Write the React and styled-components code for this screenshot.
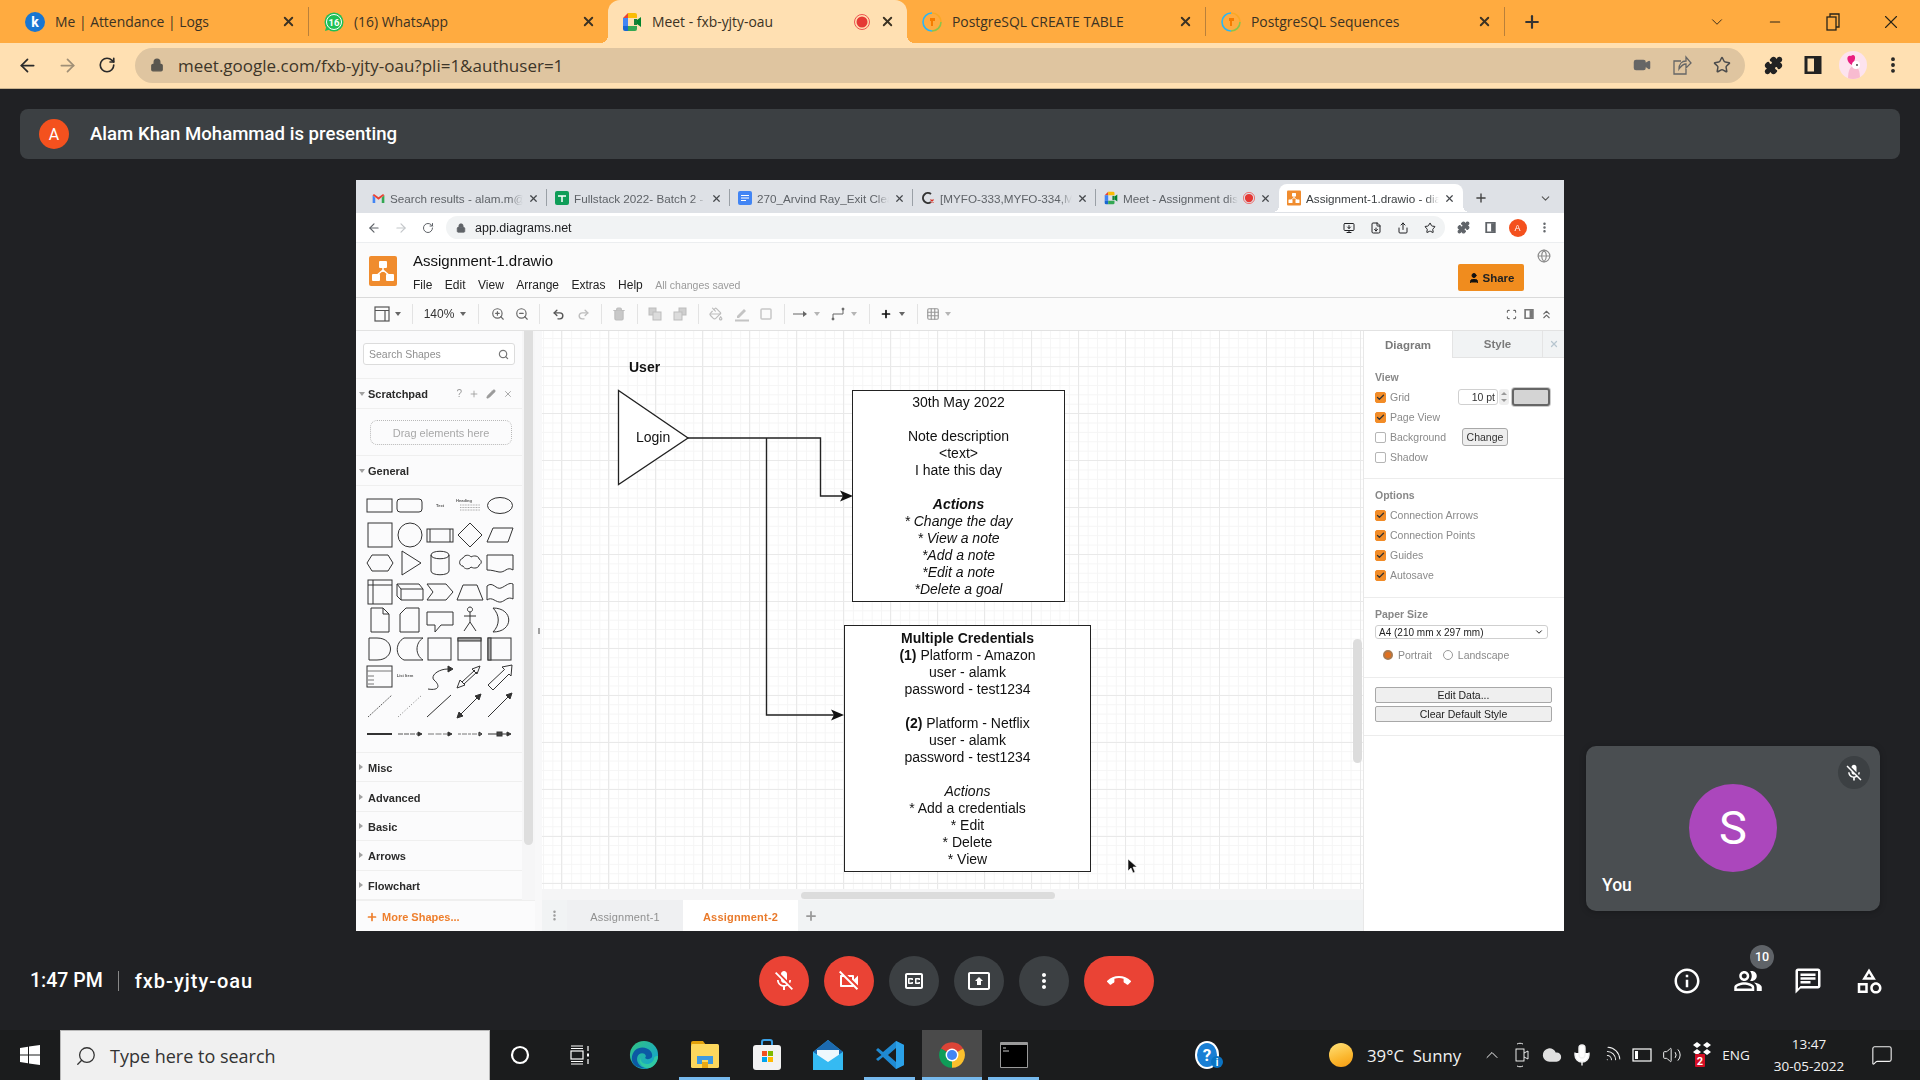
import React from "react";
import styled, { createGlobalStyle } from "styled-components";
import {
  ArrowLeft, ArrowRight, RotateCw, Lock, Video, Share, Star, Puzzle, MonitorDown, FileDown,
  MoreVertical, Minus, X, Plus, ChevronDown, ChevronUp, Search, ZoomIn, ZoomOut,
  Undo2, Redo2, Trash2, PaintBucket, Pencil, Grid3x3, Globe, Scan, ChevronsUp,
  User, Check, Cloud, Mic, Wifi, Volume2, MessageSquare,
} from "lucide-react";

const GlobalStyle = createGlobalStyle`
  html, body {
    margin: 0;
    padding: 0;
    background: #202124;
  }
  * {
    box-sizing: border-box;
  }
`;

const Page = styled.div`
  width: 1920px;
  height: 1080px;
  display: flex;
  flex-direction: column;
  overflow: hidden;
  font-family: "Open Sans", sans-serif;
`;

/* flared foot of an active browser tab */
const tabFlare = (color, r) => `
  &::before,
  &::after {
    content: "";
    position: absolute;
    bottom: 0;
    width: ${r}px;
    height: ${r}px;
  }
  &::before {
    left: -${r}px;
    background: radial-gradient(circle at 0 0, transparent ${r}px, ${color} ${r}px);
  }
  &::after {
    right: -${r}px;
    background: radial-gradient(circle at 100% 0, transparent ${r}px, ${color} ${r}px);
  }
`;

/* ---------- outer browser ---------- */

const TabStrip = styled.div`
  height: 43px;
  flex: none;
  background: #ffab40;
  display: flex;
  align-items: stretch;
  padding: 0 0 0 10px;
`;

const BrowserTab = styled.div`
  width: 299px;
  flex: none;
  display: flex;
  align-items: center;
  padding-left: ${({ $active }) => ($active ? "14px" : "15px")};
  padding-right: 12px;
  gap: 10px;
  position: relative;
  font-size: 13.9px;
  color: #3b3223;
  background: ${({ $active }) => ($active ? "#ffe0b2" : "transparent")};
  border-radius: ${({ $active }) => ($active ? "12px 12px 0 0" : "0")};
  ${({ $active }) => $active && tabFlare("#ffe0b2", 8)}

  ${({ $divider }) =>
    $divider &&
    `
    border-right: 1px solid #b9803a;
    border-image: linear-gradient(to bottom, transparent 18%, #b9803a 18%, #b9803a 82%, transparent 82%) 1;
  `}
`;

const TabTitle = styled.span`
  flex: 1;
  white-space: nowrap;
  overflow: hidden;
`;

const TabIconBox = styled.span`
  width: 20px;
  height: 20px;
  flex: none;
  display: flex;
  align-items: center;
  justify-content: center;
`;

const IconSlot = styled.span`
  width: ${({ $w }) => $w}px;
  flex: none;
  display: flex;
  align-items: center;
  justify-content: center;
  color: ${({ $color }) => $color || "inherit"};
  position: relative;
`;

const WindowControls = styled.div`
  margin-left: auto;
  display: flex;
  align-items: center;
  color: #2a2418;
`;

const NavBar = styled.div`
  height: 46px;
  flex: none;
  background: #ffe0b2;
  border-bottom: 1px solid #c9b38f;
  display: flex;
  align-items: center;
  padding: 0 7px 1px 7px;
`;

const AddressBar = styled.div`
  width: 1610px;
  height: 35px;
  flex: none;
  margin-left: 8px;
  background: #dfc5a0;
  border-radius: 18px;
  display: flex;
  align-items: center;
  padding-left: 15px;
  font-size: 17px;
  color: #3d3528;
`;

const AddressText = styled.span`
  margin-left: 14px;
  flex: 1;
  white-space: nowrap;
`;

const ProfileBadge = styled.span`
  width: 28px;
  height: 28px;
  border-radius: 50%;
  background: #fde3ee;
  display: flex;
  align-items: center;
  justify-content: center;
  overflow: hidden;
`;

/* ---------- meet ---------- */

const MeetArea = styled.main`
  flex: 1;
  min-height: 0;
  background: #202124;
  position: relative;
  display: flex;
  flex-direction: column;
`;

const Banner = styled.div`
  height: 50px;
  margin: 20px 20px 0;
  flex: none;
  background: #3c4043;
  border-radius: 8px;
  display: flex;
  align-items: center;
  padding-left: 19px;
  gap: 21px;
  color: #fff;
  font-family: Roboto, sans-serif;
  font-size: 18.6px;
  font-weight: 500;
`;

const BannerAvatar = styled.span`
  width: 30px;
  height: 30px;
  border-radius: 50%;
  background: #f4511e;
  display: flex;
  align-items: center;
  justify-content: center;
  font-size: 16px;
  font-weight: 400;
`;

const SharedScreen = styled.section`
  width: 1208px;
  height: 751px;
  margin: 21px 0 0 356px;
  flex: none;
  background: #fff;
  display: flex;
  flex-direction: column;
  filter: blur(0.35px);
  font-family: "Liberation Sans", Arial, sans-serif;
  overflow: hidden;
`;

const InnerTabs = styled.div`
  height: 33px;
  flex: none;
  background: #dee1e6;
  display: flex;
  padding: 4px 0 1px 8px;
`;

const InnerTab = styled.div`
  width: ${({ $active }) => ($active ? "184px" : "183px")};
  flex: none;
  display: flex;
  align-items: center;
  gap: 5px;
  padding: 0 8px;
  font-size: 11.7px;
  color: ${({ $active }) => ($active ? "#3c4043" : "#5f6368")};
  background: ${({ $active }) => ($active ? "#fff" : "transparent")};
  border-radius: 8px 8px 0 0;
  position: relative;
  ${({ $active }) => $active && tabFlare("#fff", 6)}
`;

const InnerDivider = styled.span`
  position: absolute;
  right: 0;
  top: 5px;
  bottom: 6px;
  width: 1px;
  background: #9aa0a6;
`;

const InnerTitle = styled.span`
  flex: 1;
  min-width: 0;
  white-space: nowrap;
  mask-image: linear-gradient(to right, #000 90%, transparent);
`;

const InnerBar = styled.div`
  height: 30px;
  flex: none;
  background: #fff;
  display: flex;
  align-items: center;
  padding-left: 4px;
  color: #5f6368;
  border-bottom: 1px solid #eceef0;
`;

const InnerAddress = styled.div`
  width: 999px;
  height: 23px;
  flex: none;
  margin-left: 5px;
  background: #f1f3f4;
  border-radius: 12px;
  display: flex;
  align-items: center;
  padding-left: 10px;
  font-size: 12.5px;
  color: #202124;
`;

const InnerAddressText = styled.span`
  flex: 1;
  margin-left: 9px;
`;

const InnerAvatar = styled.span`
  width: 18px;
  height: 18px;
  border-radius: 50%;
  background: #f4511e;
  color: #fff;
  font-size: 9px;
  display: flex;
  align-items: center;
  justify-content: center;
`;

const DrawHeader = styled.header`
  height: 55px;
  flex: none;
  background: #fbfbfb;
  border-bottom: 1px solid #dadada;
  display: flex;
  padding: 13px 0 0 13px;
  position: relative;
`;

const DrawTitleBlock = styled.div`
  margin-left: 16px;
  margin-top: -7px;
  display: flex;
  flex-direction: column;
`;

const DrawTitle = styled.div`
  font-size: 15px;
  color: #111;
  height: 25px;
  line-height: 23px;
`;

const MenuRow = styled.div`
  display: flex;
  align-items: center;
  height: 22px;
  font-size: 12px;
  color: #222;
  gap: 12.5px;
`;

const SavedNote = styled.span`
  font-size: 10.5px;
  color: #9a9a9a;
`;

const ShareButton = styled.button`
  position: absolute;
  left: 1102px;
  top: 21px;
  width: 66px;
  height: 27px;
  background: #f08c1e;
  border: 0;
  border-radius: 2px;
  display: flex;
  align-items: center;
  justify-content: center;
  gap: 3px;
  font: bold 11.5px "Liberation Sans", sans-serif;
  color: #222;
`;

const GlobeSpot = styled.span`
  position: absolute;
  left: 1181px;
  top: 6px;
  color: #8d8d8d;
  display: flex;
`;

const ToolBar = styled.div`
  height: 33px;
  flex: none;
  background: #fbfbfb;
  border-bottom: 1px solid #e2e2e2;
  display: flex;
  align-items: center;
  padding-left: 14px;
  color: #bdbdbd;
  font-size: 12px;
`;

const ToolSep = styled.span`
  width: ${({ $w }) => $w}px;
  height: 20px;
  flex: none;
  display: flex;
  justify-content: center;

  &::after {
    content: "";
    width: 1px;
    height: 100%;
    background: #e3e3e3;
  }
`;

const Caret = styled.span`
  width: ${({ $w }) => $w}px;
  flex: none;
  display: flex;
  justify-content: center;

  &::after {
    content: "";
    border-left: 3.5px solid transparent;
    border-right: 3.5px solid transparent;
    border-top: 4px solid ${({ $dark }) => ($dark ? "#666" : "#b5b5b5")};
  }
`;

const ZoomValue = styled.span`
  width: 34px;
  flex: none;
  text-align: center;
  color: #333;
  font-size: 12px;
`;

const ToolRight = styled.div`
  margin-left: auto;
  padding-right: 9px;
  display: flex;
  color: #666;
`;

const DrawBody = styled.div`
  flex: 1;
  min-height: 0;
  display: flex;
`;

/* ---------- shapes sidebar ---------- */

const Sidebar = styled.aside`
  width: 179px;
  flex: none;
  display: flex;
  flex-direction: column;
  background: #fbfbfc;
`;

const SidebarScroll = styled.div`
  flex: 1;
  min-height: 0;
  display: flex;
`;

const SidebarList = styled.div`
  width: 166px;
  flex: none;
  display: flex;
  flex-direction: column;
`;

const SidebarTrack = styled.div`
  width: 13px;
  flex: none;
  background: #f6f6f7;
  display: flex;
  justify-content: center;
`;

const SidebarThumb = styled.div`
  width: 9px;
  height: 514px;
  background: #dedede;
  border-radius: 0 0 5px 5px;
`;

const Resizer = styled.div`
  width: 7px;
  flex: none;
  background: #f8f8f9;
  display: flex;
  align-items: center;
  justify-content: center;

  &::after {
    content: "";
    width: 2px;
    height: 6px;
    background: #a0a0a0;
  }
`;

const SearchSection = styled.div`
  height: 48px;
  flex: none;
  padding: 12px 7px 0;
  border-bottom: 1px solid #efefef;
`;

const SearchBox = styled.div`
  height: 22px;
  background: #fff;
  border: 1px solid #dcdcdc;
  border-radius: 3px;
  display: flex;
  align-items: center;
  justify-content: space-between;
  padding: 0 5px;
  font-size: 10.5px;
  color: #8f8f8f;
`;

const GroupHeader = styled.div`
  height: ${({ $h }) => $h || 30}px;
  flex: none;
  display: flex;
  align-items: center;
  font-size: 11px;
  font-weight: bold;
  color: #2b2b2b;
  padding-left: 12px;
  padding-top: ${({ $h }) => ($h ? 2 : 0)}px;
  position: relative;
  border-bottom: 1px solid #efefef;
`;

const GroupArrow = styled.span`
  position: absolute;
  left: 3px;
  top: 50%;
  margin-top: -2px;
  ${({ $open }) =>
    $open
      ? `border-left: 3px solid transparent; border-right: 3px solid transparent; border-top: 4px solid #a0a0a0;`
      : `margin-top: -3px; border-top: 3px solid transparent; border-bottom: 3px solid transparent; border-left: 4px solid #a0a0a0;`}
`;

const ScratchTools = styled.span`
  margin-left: auto;
  display: flex;
  align-items: center;
  gap: 7px;
  padding-right: 9px;
  color: #9a9a9a;
  font-weight: normal;
  font-size: 10px;
`;

const DropSection = styled.div`
  height: 47px;
  flex: none;
  padding: 11px 10px 0 14px;
  border-bottom: 1px solid #efefef;
`;

const DropBox = styled.div`
  height: 25px;
  border: 1px dotted #b8b8b8;
  border-radius: 7px;
  display: flex;
  align-items: center;
  justify-content: center;
  font-size: 11px;
  color: #a8a8a8;
`;

const Palette = styled.div`
  height: 267px;
  flex: none;
  padding: 6px 0 0 9px;
  display: grid;
  grid-template-columns: repeat(5, 30px);
  grid-auto-rows: 28.5px;
  border-bottom: 1px solid #efefef;
`;

const ShapeSvg = styled.svg`
  width: 30px;
  height: 28px;
  overflow: visible;
  fill: none;
  stroke: #333;
  stroke-width: 1;

  text {
    stroke: none;
    fill: #555;
    font-family: "Liberation Sans", sans-serif;
    font-size: 4px;
    font-weight: bold;
    text-anchor: middle;
  }
`;

const MoreShapes = styled.div`
  height: 31px;
  flex: none;
  display: flex;
  align-items: center;
  gap: 4px;
  padding: 2px 0 0 10px;
  font-size: 11px;
  font-weight: bold;
  color: #ee7f2d;
  border-top: 1px solid #efefef;
`;

/* ---------- canvas ---------- */

const CanvasColumn = styled.div`
  flex: 1;
  min-width: 0;
  display: flex;
  flex-direction: column;
`;

const Canvas = styled.div`
  flex: 1;
  min-height: 0;
  position: relative;
  overflow: hidden;
  background-color: #fff;
  background-image:
    linear-gradient(to right, #e9e9e9 1px, transparent 1px),
    linear-gradient(to bottom, #e9e9e9 1px, transparent 1px),
    linear-gradient(to right, #f5f5f5 1px, transparent 1px),
    linear-gradient(to bottom, #f5f5f5 1px, transparent 1px);
  background-size: 47px 47px, 47px 47px, 9.4px 9.4px, 9.4px 9.4px;
  background-position: 19px 35px, 19px 35px, 1px 7px, 1px 7px;
`;

const DiagramWires = styled.svg`
  position: absolute;
  inset: 0;
  width: 100%;
  height: 100%;
`;

const DiagramText = styled.div`
  position: absolute;
  left: ${({ $x }) => $x}px;
  top: ${({ $y }) => $y}px;
  font-size: 14px;
  line-height: 17px;
  color: #111;
  font-weight: ${({ $bold }) => ($bold ? "bold" : "normal")};
`;

const NoteBox = styled.div`
  position: absolute;
  left: ${({ $x }) => $x}px;
  top: ${({ $y }) => $y}px;
  width: ${({ $w }) => $w}px;
  height: ${({ $h }) => $h}px;
  padding-top: ${({ $pad }) => $pad}px;
  background: #fff;
  border: 1.5px solid #222;
  text-align: center;
  font-size: 14px;
  line-height: 17px;
  color: #111;
`;

const NoteLine = styled.div`
  height: 17px;
  font-style: ${({ $italic }) => ($italic ? "italic" : "normal")};
  font-weight: ${({ $bold }) => ($bold ? "bold" : "normal")};
  white-space: pre;
`;

const CanvasScrollThumb = styled.div`
  position: absolute;
  left: 811px;
  top: 308px;
  width: 9px;
  height: 124px;
  background: #dcdcdc;
  border-radius: 5px;
`;

const Pointer = styled.svg`
  position: absolute;
  left: 585px;
  top: 527px;
  width: 11px;
  height: 16px;
`;

const HorizontalStrip = styled.div`
  height: 11px;
  flex: none;
  background: #f5f5f6;
  padding: 3px 0 0 259px;
`;

const HorizontalThumb = styled.div`
  width: 254px;
  height: 7px;
  background: #dcdcdc;
  border-radius: 4px;
`;

const PageTabs = styled.div`
  height: 31px;
  flex: none;
  background: #f1f3f4;
  display: flex;
  align-items: stretch;
  font-size: 11px;
  font-weight: bold;
`;

const PageMenu = styled.span`
  width: 25px;
  flex: none;
  display: flex;
  align-items: center;
  justify-content: center;
  color: #999;
`;

const PageTab = styled.span`
  width: ${({ $w }) => $w}px;
  flex: none;
  display: flex;
  align-items: center;
  justify-content: center;
  padding-top: 2px;
  color: ${({ $active }) => ($active ? "#e97a2b" : "#909090")};
  background: ${({ $active }) => ($active ? "#fff" : "#eff0f2")};
  font-weight: ${({ $active }) => ($active ? "bold" : "normal")};
  letter-spacing: 0.2px;
`;

const PageAdd = styled.span`
  width: 26px;
  display: flex;
  align-items: center;
  justify-content: center;
  color: #999;
`;

/* ---------- format panel ---------- */

const FormatPanel = styled.aside`
  width: 201px;
  flex: none;
  background: #fff;
  border-left: 1px solid #e8e8e8;
  display: flex;
  flex-direction: column;
  font-size: 10.5px;
  color: #8a8a8a;
`;

const PanelTabs = styled.div`
  height: 27px;
  flex: none;
  display: flex;
  font-size: 11.5px;
  font-weight: bold;
  color: #7a7a7a;
`;

const PanelTab = styled.div`
  width: ${({ $w }) => $w}px;
  flex: none;
  display: flex;
  align-items: center;
  justify-content: center;
  background: ${({ $active }) => ($active ? "#fff" : "#f1f3f4")};
  border-bottom: ${({ $active }) => ($active ? "none" : "1px solid #e4e4e4")};
  border-left: ${({ $active }) => ($active ? "none" : "1px solid #e4e4e4")};
  color: ${({ $light }) => ($light ? "#b8c6cf" : "inherit")};
`;

const PanelSection = styled.div`
  padding: ${({ $top }) => $top}px 11px ${({ $bottom }) => $bottom}px;
  border-bottom: 1px solid #ececec;
`;

const PanelHeading = styled.div`
  height: 14px;
  line-height: 14px;
  margin-bottom: 3px;
  font-weight: bold;
  color: #888;
`;

const OptionRow = styled.div`
  height: 20px;
  display: flex;
  align-items: center;
  white-space: nowrap;
`;

const CheckBox = styled.span`
  width: 11px;
  height: 11px;
  flex: none;
  border-radius: 2px;
  margin-right: 4px;
  display: flex;
  align-items: center;
  justify-content: center;
  color: #333;
  background: ${({ $on }) => ($on ? "#f28c28" : "#fff")};
  border: 1px solid ${({ $on }) => ($on ? "#f28c28" : "#b5b5b5")};
`;

const OptionLabel = styled.span`
  width: ${({ $w }) => ($w ? `${$w}px` : "auto")};
  flex: none;
`;

const PointInput = styled.span`
  width: 40px;
  height: 16px;
  background: #fff;
  border: 1px solid #d0d0d0;
  border-radius: 3px;
  text-align: right;
  line-height: 14px;
  padding-right: 2px;
  color: #333;
`;

const Spinner = styled.span`
  width: 10px;
  height: 16px;
  margin-left: 1px;
  background: #eee;
  border-radius: 3px;
  display: flex;
  flex-direction: column;
  align-items: center;
  justify-content: space-evenly;

  &::before,
  &::after {
    content: "";
    border-left: 3px solid transparent;
    border-right: 3px solid transparent;
  }
  &::before {
    border-bottom: 3px solid #999;
  }
  &::after {
    border-top: 3px solid #999;
  }
`;

const ColorSwatch = styled.span`
  width: 38px;
  height: 18px;
  margin-left: 3px;
  background: #d4d4d4;
  border: 2px solid #666;
  border-radius: 3px;
  box-shadow: 0 0 0 1px #ccc;
`;

const ChangeButton = styled.span`
  width: 46px;
  height: 18px;
  margin-left: 4px;
  background: #eeeeee;
  border: 1px solid #a8a8a8;
  border-radius: 3px;
  color: #333;
  display: flex;
  align-items: center;
  justify-content: center;
`;

const PaperSelect = styled.div`
  width: 173px;
  height: 14px;
  margin-top: 4px;
  border: 1px solid #cfcfcf;
  border-radius: 3px;
  display: flex;
  align-items: center;
  justify-content: space-between;
  padding: 0 3px;
  color: #222;
  font-size: 10px;
`;

const RadioRow = styled.div`
  height: 20px;
  margin-top: 6px;
  display: flex;
  align-items: center;
  padding-left: 8px;
`;

const RadioDot = styled.span`
  width: 10px;
  height: 10px;
  flex: none;
  border-radius: 50%;
  margin-right: 5px;
  margin-left: ${({ $gap }) => $gap || 0}px;
  background: ${({ $on }) => ($on ? "#e0701f" : "#fff")};
  border: ${({ $on }) => ($on ? "2px solid #a8794f" : "1px solid #999")};
`;

const WideButton = styled.div`
  width: 177px;
  height: 16px;
  margin-bottom: ${({ $gap }) => $gap || 0}px;
  background: #efefef;
  border: 1px solid #a8a8a8;
  border-radius: 2px;
  color: #222;
  display: flex;
  align-items: center;
  justify-content: center;
`;

/* ---------- meet bottom ---------- */

const SelfTile = styled.div`
  position: absolute;
  left: 1586px;
  top: 657px;
  width: 294px;
  height: 165px;
  background: #4a4e51;
  border-radius: 10px;
  box-shadow: 0 1px 6px rgba(0, 0, 0, 0.25);
  display: flex;
  align-items: center;
  justify-content: center;
`;

const SelfAvatar = styled.div`
  width: 88px;
  height: 88px;
  margin-top: -2px;
  border-radius: 50%;
  background: #ab47bc;
  color: #fff;
  font-family: Roboto, sans-serif;
  font-size: 47px;
  display: flex;
  align-items: center;
  justify-content: center;
`;

const SelfName = styled.span`
  position: absolute;
  left: 16px;
  bottom: 16px;
  color: #fff;
  font-family: Roboto, sans-serif;
  font-size: 17.5px;
  font-weight: 500;
`;

const SelfMute = styled.span`
  position: absolute;
  right: 10px;
  top: 10px;
  width: 32px;
  height: 33px;
  border-radius: 50%;
  background: #3c4043;
  display: flex;
  align-items: center;
  justify-content: center;
`;

const ControlBar = styled.div`
  flex: 1;
  min-height: 0;
  display: flex;
  align-items: center;
  padding: 0 20px 0 30px;
  color: #fff;
  font-family: Roboto, sans-serif;
`;

const MeetingInfo = styled.div`
  width: 729px;
  flex: none;
  display: flex;
  align-items: center;
  font-size: 19.5px;
  font-weight: 500;
`;

const MeetingCode = styled.span`
  font-size: 20px;
  letter-spacing: 1px;
`;

const InfoDivider = styled.span`
  width: 1px;
  height: 20px;
  background: #888;
  margin: 0 16px 0 15px;
`;

const CallButtons = styled.div`
  display: flex;
  gap: 15px;
`;

const CallButton = styled.button`
  width: ${({ $wide }) => ($wide ? "70px" : "50px")};
  height: 50px;
  border: 0;
  padding: 0;
  border-radius: 25px;
  background: ${({ $red }) => ($red ? "#ea4335" : "#3c4043")};
  display: flex;
  align-items: center;
  justify-content: center;
`;

const SideIcons = styled.div`
  margin-left: auto;
  display: flex;
`;

const PeopleBadge = styled.span`
  position: absolute;
  left: 33px;
  top: -21px;
  width: 24px;
  height: 24px;
  border-radius: 50%;
  background: #5f6368;
  color: #fff;
  font-size: 12.5px;
  font-weight: 500;
  display: flex;
  align-items: center;
  justify-content: center;
`;

/* ---------- windows taskbar ---------- */

const Taskbar = styled.footer`
  height: 50px;
  flex: none;
  background: #1b1c1d;
  display: flex;
  align-items: stretch;
  color: #f2f2f2;
`;

const StartSlot = styled.div`
  width: 60px;
  flex: none;
  display: flex;
  align-items: center;
  justify-content: center;
`;

const TaskSearch = styled.div`
  width: 430px;
  flex: none;
  background: #f0f0f0;
  border: 1px solid #b8b8b8;
  border-bottom: 0;
  display: flex;
  align-items: center;
  padding-left: 14px;
  gap: 13px;
  font-size: 18px;
  color: #333;
`;

const TaskSlot = styled.div`
  width: ${({ $w }) => $w}px;
  flex: none;
  margin-left: ${({ $ml }) => $ml || 0}px;
  display: flex;
  align-items: center;
  justify-content: center;
  position: relative;
  background: ${({ $focus }) => ($focus ? "#4a4a4a" : "transparent")};

  ${({ $open }) =>
    $open &&
    `
    &::after {
      content: "";
      position: absolute;
      left: 0;
      right: 0;
      bottom: 0;
      height: 3px;
      background: #76b9ed;
    }
  `}
`;

const Weather = styled.div`
  display: flex;
  align-items: center;
  margin-left: 105px;
  width: 148px;
  flex: none;
  font-size: 16.8px;
`;

const SunDot = styled.span`
  width: 24px;
  height: 24px;
  border-radius: 50%;
  margin-right: 14px;
  background: linear-gradient(160deg, #ffe27a, #fbb72f 60%, #f59a12);
`;

const TrayLang = styled.span`
  width: 38px;
  flex: none;
  display: flex;
  align-items: center;
  justify-content: center;
  font-size: 13.5px;
`;

const TrayClock = styled.div`
  width: 84px;
  margin-left: 12px;
  flex: none;
  display: flex;
  flex-direction: column;
  align-items: center;
  justify-content: center;
  gap: 5px;
  font-size: 13.5px;
  line-height: 17px;
`;

/* ---------- small drawings ---------- */

const MicOff = ({ size = 24 }) => (
  <svg width={size} height={size} viewBox="0 0 24 24" fill="#fff">
    <path d="M19 11h-1.7c0 .74-.16 1.43-.43 2.05l1.23 1.23c.56-.98.9-2.09.9-3.28zm-4.02.17c0-.06.02-.11.02-.17V5c0-1.66-1.34-3-3-3S9 3.34 9 5v.18l5.98 5.99zM4.27 3L3 4.27l6.01 6.01V11c0 1.66 1.33 3 2.99 3 .22 0 .44-.03.65-.08l1.66 1.66c-.71.33-1.5.52-2.31.52-2.76 0-5.3-2.1-5.3-5.1H5c0 3.41 2.72 6.23 6 6.72V21h2v-3.28c.91-.13 1.77-.45 2.54-.9L19.73 21 21 19.73 4.27 3z" />
  </svg>
);

const Material = ({ d, size = 24 }) => (
  <svg width={size} height={size} viewBox="0 0 24 24" fill="#fff">
    <path d={d} />
  </svg>
);

const CAM_OFF = "M9.56 8l-2-2-4.15-4.14L2 3.27 4.73 6H4c-.55 0-1 .45-1 1v10c0 .55.45 1 1 1h12c.21 0 .39-.08.55-.18L19.73 21l1.41-1.41-8.86-8.86L9.56 8zM5 16V8h1.73l8 8H5zm10-8v2.61l6 6V6.5l-4 4V7c0-.55-.45-1-1-1h-5.61l2 2H15z";
const CAPTIONS = "M19 4H5c-1.11 0-2 .9-2 2v12c0 1.1.89 2 2 2h14c1.1 0 2-.9 2-2V6c0-1.1-.9-2-2-2zm0 14H5V6h14v12zM7 15h3c.55 0 1-.45 1-1v-1H9.5v.5h-2v-3h2v.5H11v-1c0-.55-.45-1-1-1H7c-.55 0-1 .45-1 1v4c0 .55.45 1 1 1zm7 0h3c.55 0 1-.45 1-1v-1h-1.5v.5h-2v-3h2v.5H18v-1c0-.55-.45-1-1-1h-3c-.55 0-1 .45-1 1v4c0 .55.45 1 1 1z";
const PRESENT = "M21 3H3c-1.11 0-2 .89-2 2v14c0 1.11.89 2 2 2h18c1.11 0 2-.89 2-2V5c0-1.11-.89-2-2-2zm0 16.02H3V4.98h18v14.04zM10 12H8l4-4 4 4h-2v4h-4v-4z";
const MORE = "M12 8c1.1 0 2-.9 2-2s-.9-2-2-2-2 .9-2 2 .9 2 2 2zm0 2c-1.1 0-2 .9-2 2s.9 2 2 2 2-.9 2-2-.9-2-2-2zm0 6c-1.1 0-2 .9-2 2s.9 2 2 2 2-.9 2-2-.9-2-2-2z";
const HANGUP = "M12 9c-1.6 0-3.15.25-4.6.72v3.1c0 .39-.23.74-.56.9-.98.49-1.87 1.12-2.66 1.85-.18.18-.43.28-.7.28-.28 0-.53-.11-.71-.29L.29 13.08c-.18-.17-.29-.42-.29-.7 0-.28.11-.53.29-.71C3.34 8.78 7.46 7 12 7s8.66 1.78 11.71 4.67c.18.18.29.43.29.71 0 .28-.11.53-.29.71l-2.48 2.48c-.18.18-.43.29-.71.29-.27 0-.52-.11-.7-.28-.79-.74-1.69-1.36-2.67-1.85-.33-.16-.56-.5-.56-.9v-3.1C15.15 9.25 13.6 9 12 9z";
const INFO = "M11 7h2v2h-2zm0 4h2v6h-2zm1-9C6.48 2 2 6.48 2 12s4.48 10 10 10 10-4.48 10-10S17.52 2 12 2zm0 18c-4.41 0-8-3.59-8-8s3.59-8 8-8 8 3.59 8 8-3.59 8-8 8z";
const PEOPLE = "M16.67 13.13C18.04 14.06 19 15.32 19 17v3h4v-3c0-2.18-3.57-3.47-6.33-3.87zM15 12c2.21 0 4-1.79 4-4s-1.79-4-4-4c-.47 0-.91.1-1.33.24C14.5 5.27 15 6.58 15 8s-.5 2.73-1.33 3.76c.42.14.86.24 1.33.24zM9 12c2.21 0 4-1.79 4-4s-1.79-4-4-4-4 1.79-4 4 1.79 4 4 4zm0-6c1.1 0 2 .9 2 2s-.9 2-2 2-2-.9-2-2 .9-2 2-2zM9 13c-2.67 0-8 1.34-8 4v3h16v-3c0-2.66-5.33-4-8-4zm6 5H3v-.99C3.2 16.29 6.3 15 9 15s5.8 1.29 6 2v1z";
const CHAT = "M20 2H4c-1.1 0-2 .9-2 2v18l4-4h14c1.1 0 2-.9 2-2V4c0-1.1-.9-2-2-2zm0 14H6l-2 2V4h16v12zM6 12h8v2H6zm0-3h12v2H6zm0-3h12v2H6z";
const ACTIVITIES = "M12 2l-5.5 9h11L12 2zm0 3.84L13.93 9h-3.87L12 5.84zM17.5 13c-2.49 0-4.5 2.01-4.5 4.5s2.01 4.5 4.5 4.5 4.5-2.01 4.5-4.5-2.01-4.5-4.5-4.5zm0 7c-1.38 0-2.5-1.12-2.5-2.5s1.12-2.5 2.5-2.5 2.5 1.12 2.5 2.5-1.12 2.5-2.5 2.5zM3 21.5h8v-8H3v8zm2-6h4v4H5v-4z";

const KFavicon = () => (
  <svg width="20" height="20" viewBox="0 0 20 20">
    <circle cx="10" cy="10" r="10" fill="#1976d2" />
    <text x="10" y="15" fontSize="14" fontWeight="bold" fill="#fff" textAnchor="middle" fontFamily="Roboto">k</text>
  </svg>
);

const WhatsAppFavicon = () => (
  <svg width="20" height="20" viewBox="0 0 20 20">
    <circle cx="10" cy="10" r="9.5" fill="#1fbf56" />
    <path d="M1 19l1.5-5 3.5 3.5z" fill="#1fbf56" />
    <circle cx="10" cy="10" r="7.5" fill="none" stroke="#fff" strokeWidth="1" />
    <text x="10" y="13.5" fontSize="9.5" fontWeight="bold" fill="#fff" textAnchor="middle" fontFamily="Roboto">16</text>
  </svg>
);

const MeetFavicon = ({ size = 20 }) => (
  <svg width={size} height={size} viewBox="0 0 20 20">
    <path d="M1 6l5-5v5z" fill="#ea4335" />
    <path d="M1 6h5v8H1z" fill="#4285f4" />
    <path d="M6 1h7a2 2 0 0 1 2 2v3H6z" fill="#fbbc04" />
    <path d="M1 14h5v5H3a2 2 0 0 1-2-2z" fill="#1967d2" />
    <path d="M6 14h9v3a2 2 0 0 1-2 2H6z" fill="#34a853" />
    <path d="M12 7h3v6h-3z" fill="#188038" />
    <path d="M15 8l4-3v10l-4-3z" fill="#00832d" />
  </svg>
);

const PostgresFavicon = () => (
  <svg width="20" height="20" viewBox="0 0 20 20" fill="none" strokeWidth="1.6">
    <path d="M10 1a9 9 0 0 0 0 18" stroke="#29b6f6" />
    <path d="M10 1a9 9 0 0 1 9 9" stroke="#f9a825" />
    <path d="M19 10a9 9 0 0 1-9 9" stroke="#8bc34a" />
    <path d="M8 6h5v3h-2v5H9V9H8z" fill="#f57c00" stroke="none" />
  </svg>
);

const RecordDot = ({ size = 16 }) => (
  <svg width={size} height={size} viewBox="0 0 16 16">
    <circle cx="8" cy="8" r="7.5" fill="none" stroke="#ef5350" strokeWidth="1" />
    <circle cx="8" cy="8" r="5.5" fill="#e53935" />
  </svg>
);

const ProfilePicture = () => (
  <svg width="28" height="28" viewBox="0 0 28 28">
    <path d="M13 14C6 10 8 3 12 5c3-3 7 1 1 9z" fill="#e91e80" />
    <path d="M9 28c0-8 2-13 6-13s6 5 6 13z" fill="#f8bbd0" />
    <circle cx="17" cy="14" r="4" fill="#fff" />
    <circle cx="18" cy="14" r="0.9" fill="#333" />
  </svg>
);

const DrawioLogo = ({ size = 28 }) => (
  <svg width={size} height={size + 2} viewBox="0 0 28 30">
    <rect width="28" height="30" rx="2" fill="#f08c2e" />
    <path d="M14 9v7M14 14L7 20M14 14l7 6" stroke="#fff" strokeWidth="1.5" fill="none" />
    <rect x="10" y="5" width="8" height="7" rx="1" fill="#fff" />
    <rect x="3" y="18" width="8" height="7" rx="1" fill="#fff" />
    <rect x="17" y="18" width="8" height="7" rx="1" fill="#fff" />
  </svg>
);

const GmailIcon = () => (
  <svg width="13" height="13" viewBox="0 0 20 16">
    <path d="M1 3v12h4V7z" fill="#4285f4" />
    <path d="M19 3v12h-4V7z" fill="#34a853" />
    <path d="M1 3l9 7 9-7-2-2-7 5-7-5z" fill="#ea4335" />
  </svg>
);

const SheetsIcon = () => (
  <svg width="14" height="14" viewBox="0 0 14 14">
    <rect width="14" height="14" rx="2" fill="#0f9d58" />
    <path d="M3 5h8M7 5v6" stroke="#fff" strokeWidth="1.5" />
  </svg>
);

const DocsIcon = () => (
  <svg width="14" height="14" viewBox="0 0 14 14">
    <rect width="14" height="14" rx="2" fill="#4285f4" />
    <path d="M3 4.5h8M3 7h8M3 9.5h5" stroke="#fff" strokeWidth="1.1" />
  </svg>
);

const GithubLoading = () => (
  <svg width="14" height="14" viewBox="0 0 14 14" fill="none">
    <path d="M10 3a5 5 0 1 0 0 8" stroke="#333" strokeWidth="2" />
    <path d="M9.5 8.5l3 3M12.5 8.5l-3 3" stroke="#d93025" strokeWidth="1.2" />
  </svg>
);

const RestoreIcon = () => (
  <svg width="14" height="18" viewBox="0 0 14 18" fill="none" stroke="currentColor" strokeWidth="1.3">
    <rect x="1" y="4" width="9" height="13" />
    <path d="M4 4V1h9v13h-3" />
  </svg>
);

const OldShareIcon = () => (
  <svg width="20" height="20" viewBox="0 0 20 20" fill="none" stroke="#666" strokeWidth="1.3">
    <path d="M9 6H2v13h12v-5" />
    <path d="M7 14c0-5 3-8 7-8V2l5 6-5 5V9c-3 0-5 2-7 5z" />
  </svg>
);

const WindowsLogo = () => (
  <svg width="20" height="20" viewBox="0 0 20 20" fill="#fff">
    <path d="M0 3l8-1.2V9.5H0zM9 1.6L20 0v9.5H9zM0 10.5h8v7.7L0 17zM9 10.5h11V20L9 18.4z" />
  </svg>
);

const TaskViewIcon = () => (
  <svg width="20" height="20" viewBox="0 0 20 20" fill="none" stroke="#fff" strokeWidth="1.2">
    <path d="M1 1h12M1 3.5h12M1 16.5h12M1 19h12" />
    <rect x="1" y="6" width="12" height="8" />
    <path d="M18 1v5M18 14v5" />
    <rect x="17" y="8.5" width="2" height="3" fill="#fff" stroke="none" />
  </svg>
);

const EdgeIcon = () => (
  <svg width="32" height="30" viewBox="0 0 32 32">
    <defs>
      <linearGradient id="edgeA" x1="0" y1="0" x2="1" y2="1">
        <stop offset="0" stopColor="#33c481" />
        <stop offset="1" stopColor="#0f9fd8" />
      </linearGradient>
    </defs>
    <circle cx="16" cy="16" r="15" fill="url(#edgeA)" />
    <path d="M3 20C3 10 12 6 19 9c5 2 7 7 5 10-2 2-6 2-7 0 2-1 1-5-3-5-5 0-7 6-4 11 2 3 5 5 9 5C10 31 3 27 3 20z" fill="#0c59a4" />
    <path d="M31 17c0 9-8 14-12 13-6-1-9-7-7-11 0 5 5 8 10 6 3-1 5-4 5-7 2-1 3-1 4-1z" fill="#2fc8a3" />
  </svg>
);

const FilesIcon = () => (
  <svg width="28" height="30" viewBox="0 0 28 30">
    <path d="M0 3a2 2 0 0 1 2-2h10l3 4H0z" fill="#e2a10b" />
    <rect y="4" width="28" height="24" rx="1.5" fill="#fdd85d" />
    <path d="M6 16h16v8h-5v-4h-6v4H6z" fill="#3f9ae0" />
    <rect x="11" y="22" width="6" height="6" fill="#e8a913" />
  </svg>
);

const StoreIcon = () => (
  <svg width="28" height="32" viewBox="0 0 28 32">
    <path d="M9 7V3a2 2 0 0 1 2-2h6a2 2 0 0 1 2 2v4" fill="none" stroke="#3aa0e6" strokeWidth="2" />
    <rect y="6" width="28" height="25" rx="3" fill="#f2f2f2" />
    <rect x="9" y="12" width="5" height="5" fill="#f25022" />
    <rect x="15" y="12" width="5" height="5" fill="#7fba00" />
    <rect x="9" y="18" width="5" height="5" fill="#00a4ef" />
    <rect x="15" y="18" width="5" height="5" fill="#ffb900" />
  </svg>
);

const MailIcon = () => (
  <svg width="30" height="30" viewBox="0 0 30 30">
    <path d="M0 12L15 0l15 12v18H0z" fill="#2bb1ee" />
    <path d="M0 12L15 0l15 12-15 10z" fill="#1c6ab0" />
    <path d="M4 10h22v6l-11 7-11-7z" fill="#eef8fd" />
    <path d="M0 12l15 10 15-10v18H0z" fill="#35baf2" />
  </svg>
);

const VSCodeIcon = () => (
  <svg width="30" height="30" viewBox="0 0 30 30">
    <path d="M21 1l8 4v20l-8 4L8 17l-5 4-2-2 5.5-4L1 10l2-2 5 4z" fill="#1f8ad2" />
    <path d="M21 1l8 4v20l-8 4z" fill="#2ba1e8" />
    <path d="M21 8l-8 7 8 7z" fill="#1b1c1d" />
  </svg>
);

const ChromeIcon = () => (
  <svg width="28" height="28" viewBox="0 0 24 24">
    <path d="M12 12L2.47 6.5A11 11 0 0 1 21.53 6.5Z" fill="#db4437" />
    <path d="M12 12L21.53 6.5A11 11 0 0 1 12 23Z" fill="#fbc02d" />
    <path d="M12 12L12 23A11 11 0 0 1 2.47 6.5Z" fill="#0f9d58" />
    <circle cx="12" cy="12" r="5.5" fill="#fff" />
    <circle cx="12" cy="12" r="4.3" fill="#4285f4" />
  </svg>
);

const TerminalIcon = () => (
  <svg width="28" height="26" viewBox="0 0 28 26">
    <rect width="28" height="26" rx="1" fill="#9a9a9a" />
    <rect x="1" y="3" width="26" height="22" fill="#000" />
    <path d="M3 6h3M3 9h6" stroke="#ccc" strokeWidth="1" />
  </svg>
);

const HelpBadge = () => (
  <svg width="30" height="30" viewBox="0 0 30 30">
    <ellipse cx="13" cy="15" rx="12" ry="14" fill="#fff" />
    <ellipse cx="13" cy="15" rx="10" ry="12" fill="#1a7fd4" />
    <text x="13" y="21" fontSize="17" fontWeight="bold" fill="#fff" textAnchor="middle" fontFamily="Roboto">?</text>
    <circle cx="23" cy="22" r="6" fill="#0b74c4" />
    <text x="23" y="26" fontSize="10" fontWeight="bold" fill="#fff" textAnchor="middle" fontFamily="Roboto">i</text>
  </svg>
);

const DropboxBadge = () => (
  <svg width="20" height="28" viewBox="0 0 20 28">
    <path d="M5 1l4 3-4 3-4-3zM15 1l4 3-4 3-4-3zM5 8l4 3-4 3-4-3zM15 8l4 3-4 3-4-3z" fill="#fff" />
    <rect x="3" y="13" width="10" height="13" rx="1" fill="#d50f25" />
    <text x="8" y="24" fontSize="11" fontWeight="bold" fill="#fff" textAnchor="middle" fontFamily="Roboto">2</text>
  </svg>
);

const BatteryTray = () => (
  <svg width="20" height="14" viewBox="0 0 20 14" fill="none" stroke="#fff" strokeWidth="1.2">
    <rect x="1" y="1" width="18" height="12" />
    <rect x="3" y="3" width="3" height="8" fill="#fff" stroke="none" />
  </svg>
);

const CameraTray = () => (
  <svg width="16" height="28" viewBox="0 0 16 28" fill="none" stroke="#fff" strokeWidth="0.9">
    <rect x="2" y="8" width="8" height="12" />
    <path d="M10 12l4-2v8l-4-2M3 3c2-1 4-1 6 0M3 25c2 1 4 1 6 0" />
  </svg>
);

const PanelIcon = ({ size = 18, color = "#222" }) => (
  <svg width={size} height={size} viewBox="0 0 18 18">
    <path d="M2 1h14v16H2z" fill="none" stroke={color} strokeWidth="3" />
    <rect x="10" y="2" width="5" height="14" fill={color} />
  </svg>
);

const LayoutIcon = () => (
  <svg width="16" height="16" viewBox="0 0 16 16" fill="none" stroke="#555" strokeWidth="1.2">
    <rect x="1" y="1" width="14" height="14" />
    <path d="M1 4.5h14M11 4.5V15" />
  </svg>
);

const ArrowTool = () => (
  <svg width="14" height="8" viewBox="0 0 14 8" fill="#666">
    <path d="M0 3.5h10v1H0zM10 1l4 3-4 3z" />
  </svg>
);

const WaypointTool = () => (
  <svg width="14" height="14" viewBox="0 0 14 14" fill="none" stroke="#666">
    <path d="M2 12V7h10V2" />
    <circle cx="2" cy="12" r="1" fill="#666" />
    <circle cx="12" cy="2" r="1" fill="#666" />
  </svg>
);

const ShadowTool = () => (
  <svg width="14" height="14" viewBox="0 0 14 14" fill="none" stroke="#c8c8c8" strokeWidth="1.5">
    <rect x="2" y="2" width="10" height="10" rx="1" />
  </svg>
);

const LineColorTool = () => (
  <svg width="16" height="16" viewBox="0 0 16 16" fill="#c4c4c4">
    <path d="M3 10l7-7 2 2-7 7H3z" />
    <rect x="1" y="13.5" width="14" height="2" />
  </svg>
);

const FrontTool = ({ flip }) => (
  <svg width="14" height="14" viewBox="0 0 14 14" fill="#cfcfcf" stroke="#bdbdbd" transform={flip ? "scale(-1 1)" : undefined}>
    <rect x="1" y="1" width="7" height="7" />
    <rect x="5" y="5" width="8" height="8" fill="#dcdcdc" />
  </svg>
);

/* palette: one drawing per cell, 30 x 28 */
const shapes = [
  <rect x="2" y="7" width="25" height="13" />,
  <rect x="2" y="7" width="25" height="13" rx="3" />,
  <text x="15" y="15">Text</text>,
  <>
    <text x="9" y="10">Heading</text>
    <path d="M5 13h20M5 15.5h20M5 18h20" stroke="#aaa" strokeDasharray="1 0.6" />
  </>,
  <ellipse cx="15" cy="13.5" rx="12.5" ry="8" />,

  <rect x="3" y="2" width="24" height="24" />,
  <circle cx="15" cy="14" r="12" />,
  <>
    <rect x="2" y="8" width="26" height="13" />
    <path d="M5 8v13M25 8v13" />
  </>,
  <path d="M15 2l12 12-12 12L3 14z" />,
  <path d="M2 21L8 7h20l-5 14z" />,

  <path d="M2 14l5-8h16l5 8-5 8H7z" />,
  <path d="M7 2l19 12L7 26z" />,
  <path d="M6 6c0-5 18-5 18 0v16c0 5-18 5-18 0zM6 6c0 5 18 5 18 0" />,
  <path d="M8 9c2-4 7-3 8-1 3-2 8-1 8 2 3 1 3 5 0 6 0 3-5 4-8 2-2 3-7 2-8-1-4 0-5-6 0-8z" />,
  <path d="M2 6h26v15c-6-4-8 3-14 2-5-1-7-2-12-2z" />,

  <>
    <rect x="3" y="2" width="24" height="24" />
    <path d="M8 2v24M3 7h24" />
  </>,
  <path d="M2 6h22l4 5v11H6l-4-4zM2 6l4 5h22M6 11v11" />,
  <path d="M2 6h19l7 8-7 8H2l6-8z" />,
  <path d="M2 22L8 7h14l6 15z" />,
  <path d="M2 8c6-5 9 4 14 2 5-2 8-6 12-4v15c-5-3-8 2-12 3-5 1-9-6-14-2z" />,

  <path d="M6 2h12l6 6v18H6zM18 2v6h6" />,
  <path d="M5 8l6-6h13v24H5z" />,
  <path d="M2 6h26v13H16l-6 7v-7H2z" />,
  <path d="M15 6v10M9 10h12M15 16l-6 9M15 16l6 9M15 1a2.5 2.5 0 1 0 .01 0" />,
  <path d="M8 2c21 0 21 24 0 24 7-7 7-17 0-24z" />,

  <path d="M4 3h8c18 0 18 22 0 22H4z" />,
  <path d="M9 3h19c-8 5-8 17 0 22H9C0 21 0 8 9 3z" />,
  <rect x="3" y="3" width="23" height="22" />,
  <>
    <rect x="3" y="3" width="23" height="22" />
    <rect x="3" y="3" width="23" height="3" fill="#aaa" />
  </>,
  <>
    <rect x="3" y="3" width="23" height="22" />
    <rect x="3" y="3" width="3" height="22" fill="#aaa" />
  </>,

  <>
    <rect x="2" y="3" width="25" height="21" />
    <path d="M2 8h25M9 13h-6M9 17h-6M9 21h-6" stroke="#777" />
  </>,
  <text x="10" y="14">List Item</text>,
  <>
    <path d="M3 26c12 2 12-4 6-9-4-4 4-11 14-11" />
    <path d="M23 3l5 3-5 3z" fill="#333" />
  </>,
  <path d="M2 25l3-8 5 5zM25 3l-8 3 5 5zM7 19L20 7M9 21L22 9" />,
  <path d="M27 2l-10 2 2.5 2.5L3 22l5 5L24 11l2 2z" />,

  <path d="M3 25L27 3" strokeDasharray="1.5 1" stroke="#555" />,
  <path d="M3 25L27 3" strokeDasharray="1 2" stroke="#777" />,
  <path d="M2 25L26 3" />,
  <>
    <path d="M5 23L23 5" />
    <path d="M2 26l2-6 4 4zM26 2l-2 6-4-4z" fill="#333" />
  </>,
  <>
    <path d="M3 25L23 5" />
    <path d="M27 1l-2 6-4-4z" fill="#333" />
  </>,

  <path d="M2 14h25" strokeWidth="2" />,
  <>
    <path d="M3 14h20" strokeDasharray="5 1" stroke="#555" />
    <path d="M27 14l-4 -2v4z" fill="#333" />
  </>,
  <>
    <path d="M3 14h20" strokeDasharray="6 1.5" stroke="#777" />
    <path d="M27 14l-4 -2v4z" fill="#333" />
  </>,
  <>
    <path d="M3 14h22" strokeDasharray="3 1 5 1" stroke="#777" />
    <path d="M27 14l-3 -2v4z" fill="#777" />
  </>,
  <>
    <path d="M3 14h20" />
    <rect x="12" y="12" width="5" height="4" fill="#444" />
    <path d="M26 14l-4 -2v4z" fill="#333" />
  </>,
];

const outerTabs = [
  { title: "Me | Attendance | Logs", icon: <KFavicon />, divider: true },
  { title: "(16) WhatsApp", icon: <WhatsAppFavicon /> },
  { title: "Meet - fxb-yjty-oau", icon: <MeetFavicon />, active: true, rec: true },
  { title: "PostgreSQL CREATE TABLE", icon: <PostgresFavicon />, divider: true },
  { title: "PostgreSQL Sequences", icon: <PostgresFavicon />, divider: true },
];

const innerTabs = [
  { title: "Search results - alam.m@w", icon: <GmailIcon /> },
  { title: "Fullstack 2022- Batch 2 - G", icon: <SheetsIcon /> },
  { title: "270_Arvind Ray_Exit Cleara", icon: <DocsIcon /> },
  { title: "[MYFO-333,MYFO-334,MY", icon: <GithubLoading /> },
  { title: "Meet - Assignment disc", icon: <MeetFavicon size={14} />, rec: true },
  { title: "Assignment-1.drawio - diag", icon: <DrawioLogo size={14} />, active: true },
];

const note1 = [
  { t: "30th May 2022" },
  { t: " " },
  { t: "Note description" },
  { t: "<text>" },
  { t: "I hate this day" },
  { t: " " },
  { t: "Actions", i: true, b: true },
  { t: "* Change the day", i: true },
  { t: "* View a note", i: true },
  { t: "*Add a note", i: true },
  { t: "*Edit a note", i: true },
  { t: "*Delete a goal", i: true },
];

const viewOptions = [
  { label: "Grid", on: true, w: 68, extra: "grid" },
  { label: "Page View", on: true },
  { label: "Background", on: false, w: 68, extra: "change" },
  { label: "Shadow", on: false },
];

const otherOptions = ["Connection Arrows", "Connection Points", "Guides", "Autosave"];

const Option = ({ label, on, w, extra }) => (
  <OptionRow>
    <CheckBox $on={on}>{on && <Check size={9} strokeWidth={3.5} />}</CheckBox>
    <OptionLabel $w={w}>{label}</OptionLabel>
    {extra === "grid" && (
      <>
        <PointInput>10 pt</PointInput>
        <Spinner />
        <ColorSwatch />
      </>
    )}
    {extra === "change" && <ChangeButton>Change</ChangeButton>}
  </OptionRow>
);

export default function App() {
  return (
    <Page>
      <GlobalStyle />

      <TabStrip>
        {outerTabs.map((tab) => (
          <BrowserTab key={tab.title} $active={tab.active} $divider={tab.divider}>
            <TabIconBox>{tab.icon}</TabIconBox>
            <TabTitle>{tab.title}</TabTitle>
            {tab.rec && <RecordDot />}
            <X size={15} strokeWidth={3} />
          </BrowserTab>
        ))}
        <IconSlot $w={54}>
          <Plus size={20} strokeWidth={2.6} color="#333" />
        </IconSlot>
        <WindowControls>
          <IconSlot $w={58}>
            <ChevronDown size={18} strokeWidth={1.2} />
          </IconSlot>
          <IconSlot $w={58}>
            <Minus size={16} strokeWidth={1.6} />
          </IconSlot>
          <IconSlot $w={58}>
            <RestoreIcon />
          </IconSlot>
          <IconSlot $w={58}>
            <X size={22} strokeWidth={1.2} />
          </IconSlot>
        </WindowControls>
      </TabStrip>

      <NavBar>
        <IconSlot $w={40}>
          <ArrowLeft size={21} strokeWidth={2} color="#2a2a2a" />
        </IconSlot>
        <IconSlot $w={40}>
          <ArrowRight size={21} strokeWidth={2} color="#a08f76" />
        </IconSlot>
        <IconSlot $w={40}>
          <RotateCw size={18} strokeWidth={2.2} color="#2a2a2a" />
        </IconSlot>
        <AddressBar>
          <Lock size={14} fill="#59564f" color="#59564f" />
          <AddressText>meet.google.com/fxb-yjty-oau?pli=1&amp;authuser=1</AddressText>
          <IconSlot $w={40}>
            <Video size={18} fill="#666" color="#666" />
          </IconSlot>
          <IconSlot $w={40}>
            <OldShareIcon />
          </IconSlot>
          <IconSlot $w={40} style={{ marginRight: 3 }}>
            <Star size={18} color="#4c4c4c" strokeWidth={2} />
          </IconSlot>
        </AddressBar>
        <IconSlot $w={40} style={{ marginLeft: 8 }}>
          <Puzzle size={19} fill="#222" color="#222" />
        </IconSlot>
        <IconSlot $w={40}>
          <PanelIcon />
        </IconSlot>
        <IconSlot $w={40}>
          <ProfileBadge>
            <ProfilePicture />
          </ProfileBadge>
        </IconSlot>
        <IconSlot $w={40}>
          <MoreVertical size={20} strokeWidth={2.6} color="#222" />
        </IconSlot>
      </NavBar>

      <MeetArea>
        <Banner>
          <BannerAvatar>A</BannerAvatar>
          <span>Alam Khan Mohammad is presenting</span>
        </Banner>

        <SharedScreen>
          <InnerTabs>
            {innerTabs.map((tab, i) => (
              <InnerTab key={tab.title} $active={tab.active}>
                {tab.icon}
                <InnerTitle>{tab.title}</InnerTitle>
                {tab.rec && <RecordDot size={12} />}
                <X size={11} strokeWidth={2.6} color="#45484c" />
                {i < 4 && <InnerDivider />}
              </InnerTab>
            ))}
            <IconSlot $w={36} $color="#444">
              <Plus size={14} strokeWidth={2.4} />
            </IconSlot>
            <IconSlot $w={32} $color="#555" style={{ marginLeft: 30 }}>
              <ChevronDown size={13} strokeWidth={2} />
            </IconSlot>
          </InnerTabs>

          <InnerBar>
            <IconSlot $w={27}>
              <ArrowLeft size={14} />
            </IconSlot>
            <IconSlot $w={27} $color="#c4c7ca">
              <ArrowRight size={14} />
            </IconSlot>
            <IconSlot $w={27}>
              <RotateCw size={12} />
            </IconSlot>
            <InnerAddress>
              <Lock size={10} fill="#5f6368" color="#5f6368" />
              <InnerAddressText>app.diagrams.net</InnerAddressText>
              <IconSlot $w={27}>
                <MonitorDown size={12} />
              </IconSlot>
              <IconSlot $w={27}>
                <FileDown size={12} />
              </IconSlot>
              <IconSlot $w={27}>
                <Share size={12} />
              </IconSlot>
              <IconSlot $w={27} style={{ marginRight: 2 }}>
                <Star size={12} />
              </IconSlot>
            </InnerAddress>
            <IconSlot $w={27} style={{ marginLeft: 5 }}>
              <Puzzle size={13} fill="#5f6368" />
            </IconSlot>
            <IconSlot $w={27}>
              <PanelIcon size={11} color="#5f6368" />
            </IconSlot>
            <IconSlot $w={27}>
              <InnerAvatar>A</InnerAvatar>
            </IconSlot>
            <IconSlot $w={26}>
              <MoreVertical size={13} strokeWidth={2.6} />
            </IconSlot>
          </InnerBar>

          <DrawHeader>
            <DrawioLogo />
            <DrawTitleBlock>
              <DrawTitle>Assignment-1.drawio</DrawTitle>
              <MenuRow>
                <span>File</span>
                <span>Edit</span>
                <span>View</span>
                <span>Arrange</span>
                <span>Extras</span>
                <span>Help</span>
                <SavedNote>All changes saved</SavedNote>
              </MenuRow>
            </DrawTitleBlock>
            <ShareButton>
              <User size={12} fill="#111" color="#111" />
              Share
            </ShareButton>
            <GlobeSpot>
              <Globe size={14} />
            </GlobeSpot>
          </DrawHeader>

          <ToolBar>
            <IconSlot $w={24}>
              <LayoutIcon />
            </IconSlot>
            <Caret $w={8} $dark />
            <ToolSep $w={20} />
            <ZoomValue>140%</ZoomValue>
            <Caret $w={14} $dark />
            <ToolSep $w={16} />
            <IconSlot $w={23} $color="#666">
              <ZoomIn size={14} />
            </IconSlot>
            <IconSlot $w={25} $color="#666">
              <ZoomOut size={14} />
            </IconSlot>
            <ToolSep $w={11} />
            <IconSlot $w={26} $color="#555">
              <Undo2 size={13} strokeWidth={2.6} />
            </IconSlot>
            <IconSlot $w={24}>
              <Redo2 size={13} strokeWidth={2.6} />
            </IconSlot>
            <ToolSep $w={12} />
            <IconSlot $w={24}>
              <Trash2 size={14} fill="#c8c8c8" />
            </IconSlot>
            <ToolSep $w={12} />
            <IconSlot $w={24}>
              <FrontTool />
            </IconSlot>
            <IconSlot $w={25}>
              <FrontTool flip />
            </IconSlot>
            <ToolSep $w={12} />
            <IconSlot $w={24}>
              <PaintBucket size={14} />
            </IconSlot>
            <IconSlot $w={27}>
              <LineColorTool />
            </IconSlot>
            <IconSlot $w={22}>
              <ShadowTool />
            </IconSlot>
            <ToolSep $w={14} />
            <IconSlot $w={18}>
              <ArrowTool />
            </IconSlot>
            <Caret $w={16} />
            <IconSlot $w={25}>
              <WaypointTool />
            </IconSlot>
            <Caret $w={8} />
            <ToolSep $w={22} />
            <IconSlot $w={12} $color="#111">
              <Plus size={14} strokeWidth={3.4} />
            </IconSlot>
            <Caret $w={20} $dark />
            <ToolSep $w={10} />
            <IconSlot $w={21} $color="#999">
              <Grid3x3 size={14} />
            </IconSlot>
            <Caret $w={10} />
            <ToolRight>
              <IconSlot $w={20}>
                <Scan size={11} strokeWidth={2.4} />
              </IconSlot>
              <IconSlot $w={16}>
                <PanelIcon size={10} color="#777" />
              </IconSlot>
              <IconSlot $w={18}>
                <ChevronsUp size={13} />
              </IconSlot>
            </ToolRight>
          </ToolBar>

          <DrawBody>
            <Sidebar>
              <SidebarScroll>
                <SidebarList>
                  <SearchSection>
                    <SearchBox>
                      Search Shapes
                      <Search size={11} strokeWidth={2.6} color="#777" />
                    </SearchBox>
                  </SearchSection>
                  <GroupHeader>
                    <GroupArrow $open />
                    Scratchpad
                    <ScratchTools>
                      <span>?</span>
                      <Plus size={10} />
                      <Pencil size={10} fill="#9a9a9a" />
                      <X size={10} />
                    </ScratchTools>
                  </GroupHeader>
                  <DropSection>
                    <DropBox>Drag elements here</DropBox>
                  </DropSection>
                  <GroupHeader>
                    <GroupArrow $open />
                    General
                  </GroupHeader>
                  <Palette>
                    {shapes.map((shape, i) => (
                      <ShapeSvg key={i} viewBox="0 0 30 28">
                        {shape}
                      </ShapeSvg>
                    ))}
                  </Palette>
                  {["Misc", "Advanced", "Basic", "Arrows", "Flowchart"].map((name) => (
                    <GroupHeader key={name} $h={29.4}>
                      <GroupArrow />
                      {name}
                    </GroupHeader>
                  ))}
                </SidebarList>
                <SidebarTrack>
                  <SidebarThumb />
                </SidebarTrack>
              </SidebarScroll>
              <MoreShapes>
                <Plus size={12} strokeWidth={3.4} />
                More Shapes...
              </MoreShapes>
            </Sidebar>
            <Resizer />

            <CanvasColumn>
              <Canvas>
                <DiagramWires>
                  <path d="M76.5 59.5V153.5L146 107Z" fill="#fff" stroke="#222" strokeWidth="1.3" />
                  <path d="M146 107H278.5V165H303M224.5 107V384H294" fill="none" stroke="#222" strokeWidth="1.4" />
                  <path d="M311 165l-13 -5.5 3 5.5 -3 5.5z" fill="#111" />
                  <path d="M302 384l-13 -5.5 3 5.5 -3 5.5z" fill="#111" />
                </DiagramWires>
                <DiagramText $x={87} $y={28} $bold>
                  User
                </DiagramText>
                <DiagramText $x={94} $y={98}>
                  Login
                </DiagramText>
                <NoteBox $x={310} $y={59} $w={213} $h={212} $pad={3}>
                  {note1.map((line, i) => (
                    <NoteLine key={i} $italic={line.i} $bold={line.b}>
                      {line.t}
                    </NoteLine>
                  ))}
                </NoteBox>
                <NoteBox $x={302} $y={294} $w={247} $h={247} $pad={4}>
                  <NoteLine $bold>Multiple Credentials</NoteLine>
                  <NoteLine>
                    <b>(1)</b> Platform - Amazon
                  </NoteLine>
                  <NoteLine>user - alamk</NoteLine>
                  <NoteLine>password - test1234</NoteLine>
                  <NoteLine> </NoteLine>
                  <NoteLine>
                    <b>(2)</b> Platform - Netflix
                  </NoteLine>
                  <NoteLine>user - alamk</NoteLine>
                  <NoteLine>password - test1234</NoteLine>
                  <NoteLine> </NoteLine>
                  <NoteLine $italic>Actions</NoteLine>
                  <NoteLine>* Add a credentials</NoteLine>
                  <NoteLine>* Edit</NoteLine>
                  <NoteLine>* Delete</NoteLine>
                  <NoteLine>* View</NoteLine>
                </NoteBox>
                <CanvasScrollThumb />
                <Pointer viewBox="0 0 11 16">
                  <path d="M1 1v12l3-3 2 5 2-1-2-5h4z" fill="#111" stroke="#fff" strokeWidth="0.6" />
                </Pointer>
              </Canvas>
              <HorizontalStrip>
                <HorizontalThumb />
              </HorizontalStrip>
              <PageTabs>
                <PageMenu>
                  <MoreVertical size={13} strokeWidth={2.6} />
                </PageMenu>
                <PageTab $w={116}>Assignment-1</PageTab>
                <PageTab $w={115} $active>
                  Assignment-2
                </PageTab>
                <PageAdd>
                  <Plus size={14} strokeWidth={3} />
                </PageAdd>
              </PageTabs>
            </CanvasColumn>

            <FormatPanel>
              <PanelTabs>
                <PanelTab $w={88} $active>
                  Diagram
                </PanelTab>
                <PanelTab $w={90}>Style</PanelTab>
                <PanelTab $w={22} $light>
                  <X size={10} strokeWidth={3} />
                </PanelTab>
              </PanelTabs>
              <PanelSection $top={12} $bottom={11}>
                <PanelHeading>View</PanelHeading>
                {viewOptions.map((opt) => (
                  <Option key={opt.label} {...opt} />
                ))}
              </PanelSection>
              <PanelSection $top={9} $bottom={12}>
                <PanelHeading>Options</PanelHeading>
                {otherOptions.map((label) => (
                  <Option key={label} label={label} on />
                ))}
              </PanelSection>
              <PanelSection $top={9} $bottom={12}>
                <PanelHeading>Paper Size</PanelHeading>
                <PaperSelect>
                  A4 (210 mm x 297 mm)
                  <ChevronDown size={10} strokeWidth={2.4} />
                </PaperSelect>
                <RadioRow>
                  <RadioDot $on />
                  Portrait
                  <RadioDot $gap={11} />
                  Landscape
                </RadioRow>
              </PanelSection>
              <PanelSection $top={9} $bottom={13}>
                <WideButton $gap={3}>Edit Data...</WideButton>
                <WideButton>Clear Default Style</WideButton>
              </PanelSection>
            </FormatPanel>
          </DrawBody>
        </SharedScreen>

        <SelfTile>
          <SelfAvatar>S</SelfAvatar>
          <SelfName>You</SelfName>
          <SelfMute>
            <MicOff size={20} />
          </SelfMute>
        </SelfTile>

        <ControlBar>
          <MeetingInfo>
            <span>1:47 PM</span>
            <InfoDivider />
            <MeetingCode>fxb-yjty-oau</MeetingCode>
          </MeetingInfo>
          <CallButtons>
            <CallButton $red>
              <MicOff />
            </CallButton>
            <CallButton $red>
              <Material d={CAM_OFF} />
            </CallButton>
            <CallButton>
              <Material d={CAPTIONS} />
            </CallButton>
            <CallButton>
              <Material d={PRESENT} />
            </CallButton>
            <CallButton>
              <Material d={MORE} />
            </CallButton>
            <CallButton $red $wide>
              <Material d={HANGUP} />
            </CallButton>
          </CallButtons>
          <SideIcons>
            <IconSlot $w={60}>
              <Material d={INFO} size={30} />
            </IconSlot>
            <IconSlot $w={61}>
              <Material d={PEOPLE} size={30} />
              <PeopleBadge>10</PeopleBadge>
            </IconSlot>
            <IconSlot $w={60}>
              <Material d={CHAT} size={30} />
            </IconSlot>
            <IconSlot $w={62}>
              <Material d={ACTIVITIES} size={30} />
            </IconSlot>
          </SideIcons>
        </ControlBar>
      </MeetArea>

      <Taskbar>
        <StartSlot>
          <WindowsLogo />
        </StartSlot>
        <TaskSearch>
          <Search size={22} strokeWidth={1.4} style={{ transform: "scaleX(-1)" }} />
          Type here to search
        </TaskSearch>
        <TaskSlot $w={60}>
          <svg width="20" height="20" viewBox="0 0 20 20" fill="none" stroke="#fff" strokeWidth="2.2">
            <circle cx="10" cy="10" r="8" />
          </svg>
        </TaskSlot>
        <TaskSlot $w={60}>
          <TaskViewIcon />
        </TaskSlot>
        <TaskSlot $w={61} $ml={3}>
          <EdgeIcon />
        </TaskSlot>
        <TaskSlot $w={51} $ml={5} $open>
          <FilesIcon />
        </TaskSlot>
        <TaskSlot $w={61} $ml={6}>
          <StoreIcon />
        </TaskSlot>
        <TaskSlot $w={62}>
          <MailIcon />
        </TaskSlot>
        <TaskSlot $w={51} $ml={5} $open>
          <VSCodeIcon />
        </TaskSlot>
        <TaskSlot $w={60} $ml={7} $focus $open>
          <ChromeIcon />
        </TaskSlot>
        <TaskSlot $w={51} $ml={6} $open>
          <TerminalIcon />
        </TaskSlot>
        <TaskSlot $w={30} $ml={155}>
          <HelpBadge />
        </TaskSlot>
        <Weather>
          <SunDot />
          39°C&nbsp;&nbsp;Sunny
        </Weather>
        <TaskSlot $w={30}>
          <ChevronUp size={20} strokeWidth={1.2} />
        </TaskSlot>
        <TaskSlot $w={30}>
          <CameraTray />
        </TaskSlot>
        <TaskSlot $w={30}>
          <Cloud size={20} fill="#e0e0e0" color="#e0e0e0" />
        </TaskSlot>
        <TaskSlot $w={30}>
          <Mic size={24} strokeWidth={1.4} fill="#fff" />
        </TaskSlot>
        <TaskSlot $w={30}>
          <Wifi size={20} strokeWidth={1.2} style={{ transform: "rotate(45deg)" }} />
        </TaskSlot>
        <TaskSlot $w={30}>
          <BatteryTray />
        </TaskSlot>
        <TaskSlot $w={30}>
          <Volume2 size={20} strokeWidth={1.2} />
        </TaskSlot>
        <TaskSlot $w={30}>
          <DropboxBadge />
        </TaskSlot>
        <TrayLang>ENG</TrayLang>
        <TrayClock>
          <span>13:47</span>
          <span>30-05-2022</span>
        </TrayClock>
        <TaskSlot $w={30} $ml={16}>
          <MessageSquare size={22} strokeWidth={1.2} />
        </TaskSlot>
      </Taskbar>
    </Page>
  );
}
